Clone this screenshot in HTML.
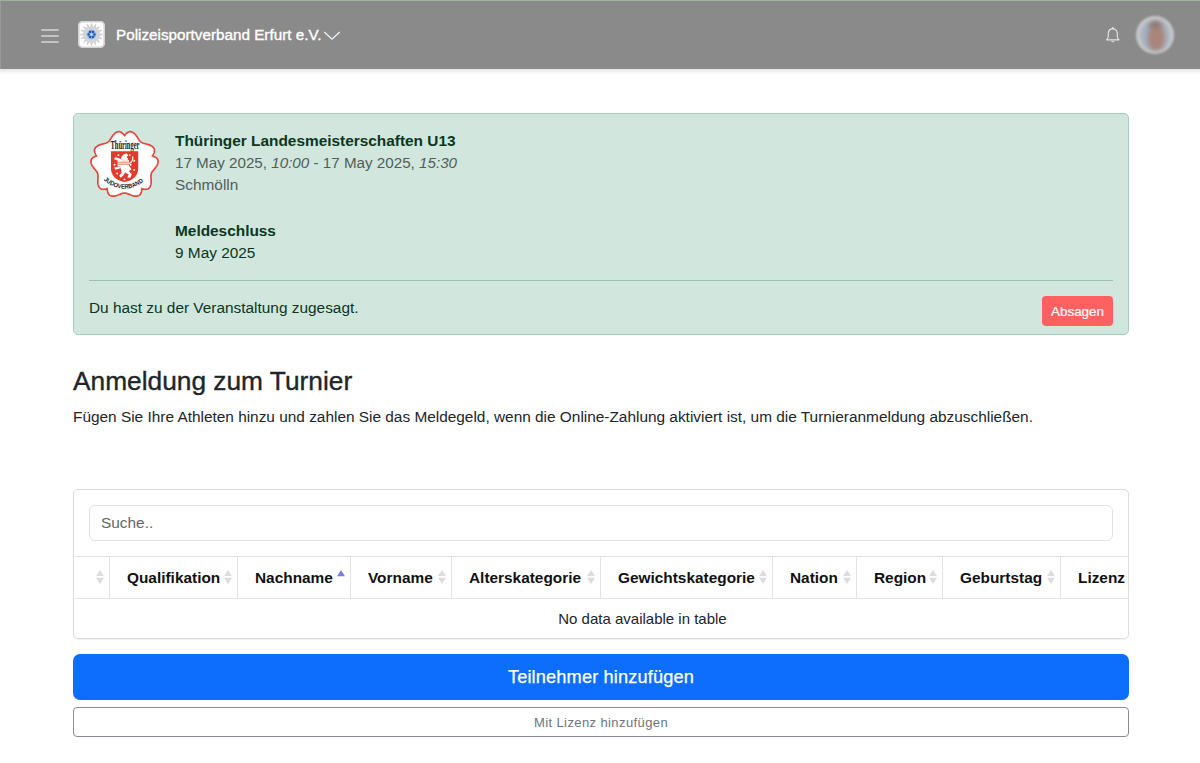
<!DOCTYPE html>
<html lang="de">
<head>
<meta charset="utf-8">
<title>Anmeldung zum Turnier</title>
<style>
*{box-sizing:border-box;margin:0;padding:0}
html,body{width:1200px;height:763px;overflow:hidden;background:#fff}
body{font-family:"Liberation Sans",sans-serif;color:#212529;position:relative;font-size:15px;line-height:1.5}
.abs{position:absolute}
.topline{left:0;top:0;width:1200px;height:1px;background:#9db59d}
header{position:absolute;left:0;top:1px;width:1200px;height:68px;background:#8a8a8a}
.shadow{left:0;top:69px;width:1200px;height:6px;background:linear-gradient(#e6e6e6,#fff)}
.hb{left:41px;width:18px;height:2px;background:#c3c3c3;border-radius:1px}
.brand{left:78px;top:21px;width:27px;height:27px;background:#fff;border-radius:5px;overflow:hidden;box-shadow:0 0 0 1.6px #d2d2d2 inset}
.title{left:116px;top:25px;font-size:15.25px;line-height:20px;color:#fff;white-space:nowrap;-webkit-text-stroke:0.35px #fff}
.alert{left:73px;top:113px;width:1056px;height:222px;background:#d1e7dd;border:1px solid #a3cfbb;border-radius:5px}
.tx{left:175px;font-size:15.4px;line-height:22.5px;white-space:nowrap;color:#0a3622}
.muted{color:#535d59}
.btn-red{left:1042px;top:296px;width:71px;height:30px;background:#ff6161;border-radius:4px;color:#fff;font-size:13.4px;line-height:30px;padding-top:1px;text-align:center;-webkit-text-stroke:0.2px #fff}
h2{position:absolute;left:73px;top:364.5px;font-size:26.3px;line-height:32px;font-weight:400;color:#212529;white-space:nowrap;-webkit-text-stroke:0.35px #212529}
.lead{left:73px;top:406px;font-size:15.4px;line-height:22px;white-space:nowrap;color:#212529}
.card{left:73px;top:489px;width:1056px;height:150px;border:1px solid #dcdcdc;border-radius:5px;overflow:hidden;box-shadow:0 1px 1px rgba(0,0,0,.06)}
.search{left:89px;top:505px;width:1024px;height:36px;border:1px solid #dee2e6;border-radius:6px;color:#5f666c;font-size:15.4px;line-height:34px;padding-left:11px}
.th{top:556px;height:43px;border-top:1px solid #e3e3e3;border-bottom:1px solid #e3e3e3}
.vb{top:557px;width:1px;height:41px;background:#e3e3e3}
.hd{top:570px;font-size:15.4px;line-height:16px;font-weight:700;color:#111;white-space:nowrap}
.btn-blue{left:73px;top:654px;width:1056px;height:46px;background:#0d6efd;border-radius:7px;color:#fff;font-size:18.2px;letter-spacing:0.15px;line-height:46px;text-align:center;-webkit-text-stroke:0.25px #fff}
.btn-out{left:73px;top:707px;width:1056px;height:30px;border:1px solid #878d93;border-radius:4px;color:#6c757d;font-size:13px;letter-spacing:0.4px;line-height:29px;text-align:center}
.sort{top:570px;width:8px;height:14px}
.sort svg{display:block}
.nodata{left:75px;width:1135px;top:608px;font-size:15px;line-height:22px;text-align:center;color:#212529}
.avatar{left:1136px;top:16px;width:38px;height:38px;border-radius:50%;background:#c9c9c9;filter:blur(0.8px);overflow:hidden}
.avatar i{position:absolute;left:3.5px;top:3.5px;width:31px;height:31px;border-radius:50%;background:radial-gradient(ellipse 11px 16px at 53% 58%,#b08377 0%,#a88479 50%,rgba(168,132,121,0) 100%),radial-gradient(ellipse 9px 7px at 50% 18%,#7f6a66 0%,rgba(127,106,102,0) 100%),linear-gradient(90deg,#aab7c7 0%,#a0acbd 25%,#9c9195 50%,#a6adbb 75%,#b2bdca 100%);filter:blur(1.5px)}
</style>
</head>
<body>
<div class="abs topline"></div>
<header></header>
<div class="abs" style="left:0;top:1px;width:1px;height:68px;background:#9a9a9a"></div>
<div class="abs shadow"></div>
<div class="abs hb" style="top:29px"></div>
<div class="abs hb" style="top:35px"></div>
<div class="abs hb" style="top:41px"></div>
<div class="abs brand"><svg width="27" height="27" viewBox="0 0 27 27" style="position:absolute;left:0;top:0"><polygon points="13.50,2.20 12.17,6.83 9.18,3.06 9.72,7.85 5.51,5.51 7.85,9.72 3.06,9.18 6.83,12.17 2.20,13.50 6.83,14.83 3.06,17.82 7.85,17.28 5.51,21.49 9.72,19.15 9.18,23.94 12.17,20.17 13.50,24.80 14.83,20.17 17.82,23.94 17.28,19.15 21.49,21.49 19.15,17.28 23.94,17.82 20.17,14.83 24.80,13.50 20.17,12.17 23.94,9.18 19.15,9.72 21.49,5.51 17.28,7.85 17.82,3.06 14.83,6.83" fill="#d6d6d6" stroke="#c4c4c4" stroke-width="0.6"/><circle cx="13.5" cy="13.5" r="5.3" fill="#b8cdea"/><circle cx="13.5" cy="13.5" r="4.4" fill="#7fa5dc"/><circle cx="12.05" cy="10.99" r="1.15" fill="#1f56b0"/><circle cx="10.60" cy="13.50" r="1.15" fill="#1f56b0"/><circle cx="12.05" cy="16.01" r="1.15" fill="#1f56b0"/><circle cx="14.95" cy="16.01" r="1.15" fill="#1f56b0"/><circle cx="16.40" cy="13.50" r="1.15" fill="#1f56b0"/><circle cx="14.95" cy="10.99" r="1.15" fill="#1f56b0"/><circle cx="13.5" cy="13.5" r="1.3" fill="#c9daf2"/></svg></div>
<svg class="abs" style="left:322px;top:29px" width="20" height="12" viewBox="0 0 20 12"><polyline points="2.3,3 10,10.2 17.7,3" fill="none" stroke="#f2f2f2" stroke-width="1.3"/></svg>
<svg class="abs" style="left:1104px;top:25px" width="18" height="20" viewBox="0 0 18 20"><path d="M2.7,14.8 L14.9,14.8 C13.9,13.9 13.3,12.6 13.3,11 L13.3,8.6 C13.3,5.7 11.5,3.8 8.8,3.8 C6.1,3.8 4.3,5.7 4.3,8.6 L4.3,11 C4.3,12.6 3.7,13.9 2.7,14.8 Z" fill="none" stroke="#e4e4e4" stroke-width="1.15" stroke-linejoin="round"/><circle cx="8.8" cy="3.1" r="1" fill="#e4e4e4"/><path d="M7.1,16.3 C7.3,17.6 10.3,17.6 10.5,16.3 Z" fill="#e4e4e4"/></svg>
<div class="abs avatar"><i></i></div>
<div class="abs title">Polizeisportverband Erfurt e.V.</div>

<div class="abs alert"></div>
<svg class="abs" style="left:90px;top:129px" width="69" height="71" viewBox="0 0 69 71">
<polygon points="34.50,6.50 33.98,5.87 33.43,5.26 32.86,4.68 32.28,4.16 31.68,3.70 31.07,3.31 30.46,3.00 29.85,2.79 29.24,2.66 28.64,2.64 28.05,2.72 27.48,2.87 26.92,3.07 26.38,3.32 25.85,3.61 25.34,3.96 24.85,4.34 24.38,4.76 23.93,5.21 23.50,5.69 23.09,6.19 22.71,6.71 22.33,7.24 21.98,7.77 21.63,8.31 21.30,8.84 20.98,9.36 20.66,9.87 20.34,10.36 20.03,10.83 19.70,11.28 19.38,11.70 19.04,12.09 18.68,12.45 18.31,12.78 17.92,13.09 17.52,13.36 17.09,13.61 16.63,13.83 16.15,14.04 15.65,14.22 15.13,14.39 14.59,14.54 14.02,14.69 13.44,14.84 12.84,14.99 12.23,15.14 11.62,15.30 11.00,15.47 10.38,15.66 9.77,15.87 9.16,16.11 8.58,16.37 8.01,16.65 7.46,16.97 6.95,17.32 6.47,17.70 6.02,18.11 5.62,18.55 5.26,19.02 4.94,19.51 4.68,20.05 4.52,20.62 4.44,21.24 4.46,21.89 4.56,22.57 4.74,23.27 5.00,23.98 5.32,24.70 5.69,25.41 6.10,26.12 6.54,26.81 5.77,27.12 5.03,27.45 4.31,27.81 3.63,28.20 3.00,28.63 2.45,29.09 1.96,29.58 1.57,30.09 1.26,30.64 1.06,31.20 0.95,31.78 0.92,32.37 0.93,32.96 1.00,33.56 1.12,34.15 1.29,34.74 1.50,35.32 1.75,35.90 2.04,36.47 2.37,37.02 2.72,37.57 3.09,38.10 3.48,38.61 3.88,39.12 4.28,39.61 4.68,40.09 5.08,40.56 5.47,41.02 5.84,41.47 6.19,41.92 6.51,42.36 6.81,42.80 7.07,43.25 7.31,43.70 7.51,44.15 7.68,44.61 7.82,45.09 7.92,45.57 7.99,46.08 8.04,46.59 8.06,47.12 8.06,47.67 8.04,48.24 8.00,48.82 7.96,49.42 7.92,50.03 7.87,50.66 7.83,51.30 7.81,51.94 7.80,52.59 7.81,53.23 7.85,53.88 7.91,54.52 8.01,55.15 8.14,55.76 8.31,56.36 8.52,56.93 8.78,57.48 9.07,58.01 9.40,58.50 9.78,58.95 10.21,59.36 10.71,59.69 11.27,59.95 11.90,60.14 12.57,60.25 13.29,60.30 14.05,60.27 14.83,60.19 15.62,60.06 16.42,59.89 17.22,59.69 17.27,60.51 17.35,61.32 17.47,62.12 17.64,62.88 17.85,63.61 18.11,64.28 18.43,64.89 18.80,65.43 19.22,65.88 19.70,66.25 20.22,66.53 20.77,66.75 21.33,66.92 21.92,67.03 22.52,67.10 23.13,67.13 23.75,67.11 24.38,67.04 25.01,66.94 25.64,66.81 26.26,66.64 26.88,66.45 27.50,66.24 28.10,66.02 28.69,65.79 29.27,65.55 29.84,65.32 30.40,65.09 30.94,64.88 31.47,64.69 32.00,64.52 32.51,64.37 33.01,64.25 33.51,64.17 34.01,64.12 34.50,64.10 34.99,64.12 35.49,64.17 35.99,64.25 36.49,64.37 37.00,64.52 37.53,64.69 38.06,64.88 38.60,65.09 39.16,65.32 39.73,65.55 40.31,65.79 40.90,66.02 41.50,66.24 42.12,66.45 42.74,66.64 43.36,66.81 43.99,66.94 44.62,67.04 45.25,67.11 45.87,67.13 46.48,67.10 47.08,67.03 47.67,66.92 48.23,66.75 48.78,66.53 49.30,66.25 49.78,65.88 50.20,65.43 50.57,64.89 50.89,64.28 51.15,63.61 51.36,62.88 51.53,62.12 51.65,61.32 51.73,60.51 51.78,59.69 52.58,59.89 53.38,60.06 54.17,60.19 54.95,60.27 55.71,60.30 56.43,60.25 57.10,60.14 57.73,59.95 58.29,59.69 58.79,59.36 59.22,58.95 59.60,58.50 59.93,58.01 60.22,57.48 60.48,56.93 60.69,56.36 60.86,55.76 60.99,55.15 61.09,54.52 61.15,53.88 61.19,53.23 61.20,52.59 61.19,51.94 61.17,51.30 61.13,50.66 61.08,50.03 61.04,49.42 61.00,48.82 60.96,48.24 60.94,47.67 60.94,47.12 60.96,46.59 61.01,46.08 61.08,45.57 61.18,45.09 61.32,44.61 61.49,44.15 61.69,43.70 61.93,43.25 62.19,42.80 62.49,42.36 62.81,41.92 63.16,41.47 63.53,41.02 63.92,40.56 64.32,40.09 64.72,39.61 65.12,39.12 65.52,38.61 65.91,38.10 66.28,37.57 66.63,37.02 66.96,36.47 67.25,35.90 67.50,35.32 67.71,34.74 67.88,34.15 68.00,33.56 68.07,32.96 68.08,32.37 68.05,31.78 67.94,31.20 67.74,30.64 67.43,30.09 67.04,29.58 66.55,29.09 66.00,28.63 65.37,28.20 64.69,27.81 63.97,27.45 63.23,27.12 62.46,26.81 62.90,26.12 63.31,25.41 63.68,24.70 64.00,23.98 64.26,23.27 64.44,22.57 64.54,21.89 64.56,21.24 64.48,20.62 64.32,20.05 64.06,19.51 63.74,19.02 63.38,18.55 62.98,18.11 62.53,17.70 62.05,17.32 61.54,16.97 60.99,16.65 60.42,16.37 59.84,16.11 59.23,15.87 58.62,15.66 58.00,15.47 57.38,15.30 56.77,15.14 56.16,14.99 55.56,14.84 54.98,14.69 54.41,14.54 53.87,14.39 53.35,14.22 52.85,14.04 52.37,13.83 51.91,13.61 51.48,13.36 51.08,13.09 50.69,12.78 50.32,12.45 49.96,12.09 49.62,11.70 49.30,11.28 48.97,10.83 48.66,10.36 48.34,9.87 48.02,9.36 47.70,8.84 47.37,8.31 47.02,7.77 46.67,7.24 46.29,6.71 45.91,6.19 45.50,5.69 45.07,5.21 44.62,4.76 44.15,4.34 43.66,3.96 43.15,3.61 42.62,3.32 42.08,3.07 41.52,2.87 40.95,2.72 40.36,2.64 39.76,2.66 39.15,2.79 38.54,3.00 37.93,3.31 37.32,3.70 36.72,4.16 36.14,4.68 35.57,5.26 35.02,5.87" fill="#fff" stroke="#e8463c" stroke-width="1.7" stroke-linejoin="miter"/>
<text x="20.5" y="20.2" font-family="Liberation Serif" font-weight="700" font-size="12" textLength="29" lengthAdjust="spacingAndGlyphs" fill="#1a1a1a">Thüringer</text>
<path d="M21,22.3 H48.2 V39 Q48.2,50.5 34.6,53 Q21,50.5 21,39 Z" fill="#e23a2e"/>
<g fill="#fff">
<path d="M31,30.5 L31.6,27.6 L33.6,25.3 L36.8,24.6 L38.2,26.4 L36.6,28 L38.3,30.2 L36.2,31.4 Z"/>
<path d="M24.6,28.6 L26.2,28.2 L32.2,30.4 L31.6,32.6 L25.8,31 L24.4,30.4 Z"/>
<rect x="27.6" y="31.2" width="11.4" height="5.9"/>
<path d="M24.2,38.6 L29.6,37.2 L30.4,39.2 L25.2,40.8 Z"/>
<path d="M29.8,37 L39.2,37 L41.6,40.2 L38.8,42.2 L41.8,45.2 L40.4,48.8 L37.4,48.4 L38.6,45.6 L35.2,43.4 L33.2,46.4 L30.8,48.8 L29.2,46.8 L31.6,43.6 L31,40.2 Z"/>
<circle cx="28.4" cy="26.3" r="0.95"/><circle cx="39.7" cy="26.1" r="0.95"/><circle cx="44.2" cy="31.7" r="0.95"/><circle cx="24.6" cy="35.7" r="0.95"/><circle cx="40.6" cy="35.7" r="0.95"/><circle cx="44.2" cy="40.9" r="0.95"/><circle cx="27.2" cy="44.5" r="0.95"/><circle cx="34.5" cy="50.4" r="0.95"/>
</g>
<path d="M38.6,34.6 C41.6,33.6 43.4,31.2 42.6,27.4" fill="none" stroke="#fff" stroke-width="1.2"/>
<g stroke="#e23a2e" stroke-width="0.7"><line x1="27.6" y1="33.2" x2="39" y2="33.2"/><line x1="27.6" y1="35.2" x2="39" y2="35.2"/></g>
<path id="arc" d="M13.5,51 Q34.5,68.5 55.5,51" fill="none"/>
<text font-family="Liberation Sans" font-size="6.3" font-weight="700" fill="#1a1a1a"><textPath href="#arc" textLength="44" lengthAdjust="spacingAndGlyphs">JUDOVERBAND</textPath></text>
</svg>
<div class="abs tx" style="top:130px;font-weight:700">Thüringer Landesmeisterschaften U13</div>
<div class="abs tx muted" style="top:151.5px;font-size:15.2px">17 May 2025, <i>10:00</i> - 17 May 2025, <i>15:30</i></div>
<div class="abs tx muted" style="top:174px">Schmölln</div>
<div class="abs tx" style="top:220px;font-weight:700">Meldeschluss</div>
<div class="abs tx" style="top:242px">9 May 2025</div>
<div class="abs" style="left:89px;top:280px;width:1024px;height:1px;background:#9fbfae"></div>
<div class="abs tx" style="left:89px;top:297px">Du hast zu der Veranstaltung zugesagt.</div>
<div class="abs btn-red">Absagen</div>

<h2>Anmeldung zum Turnier</h2>
<div class="abs lead">Fügen Sie Ihre Athleten hinzu und zahlen Sie das Meldegeld, wenn die Online-Zahlung aktiviert ist, um die Turnieranmeldung abzuschließen.</div>

<div class="abs card"></div>
<div class="abs search">Suche..</div>
<div class="abs" style="left:74px;top:556px;width:1054px;height:1px;background:#e3e3e3"></div>
<div class="abs" style="left:74px;top:598px;width:1054px;height:1px;background:#e3e3e3"></div>
<div class="abs vb" style="left:109px"></div>
<div class="abs vb" style="left:237px"></div>
<div class="abs vb" style="left:350px"></div>
<div class="abs vb" style="left:451px"></div>
<div class="abs vb" style="left:600px"></div>
<div class="abs vb" style="left:772px"></div>
<div class="abs vb" style="left:856px"></div>
<div class="abs vb" style="left:942px"></div>
<div class="abs vb" style="left:1060px"></div>
<div class="abs sort" style="left:96px"><svg width="8" height="14" viewBox="0 0 8 14"><path d="M0 6L4 0L8 6Z" fill="#dcdcdc"/><path d="M0 7.8L4 14L8 7.8Z" fill="#dcdcdc"/></svg></div>
<div class="abs hd" style="left:127px">Qualifikation</div>
<div class="abs sort" style="left:224px"><svg width="8" height="14" viewBox="0 0 8 14"><path d="M0 6L4 0L8 6Z" fill="#dcdcdc"/><path d="M0 7.8L4 14L8 7.8Z" fill="#dcdcdc"/></svg></div>
<div class="abs hd" style="left:255px">Nachname</div>
<div class="abs sort" style="left:337px"><svg width="8" height="14" viewBox="0 0 8 14"><path d="M0 6.2L4 0L8 6.2Z" fill="#7a80dd"/></svg></div>
<div class="abs hd" style="left:368px">Vorname</div>
<div class="abs sort" style="left:438px"><svg width="8" height="14" viewBox="0 0 8 14"><path d="M0 6L4 0L8 6Z" fill="#dcdcdc"/><path d="M0 7.8L4 14L8 7.8Z" fill="#dcdcdc"/></svg></div>
<div class="abs hd" style="left:469px">Alterskategorie</div>
<div class="abs sort" style="left:587px"><svg width="8" height="14" viewBox="0 0 8 14"><path d="M0 6L4 0L8 6Z" fill="#dcdcdc"/><path d="M0 7.8L4 14L8 7.8Z" fill="#dcdcdc"/></svg></div>
<div class="abs hd" style="left:618px">Gewichtskategorie</div>
<div class="abs sort" style="left:759px"><svg width="8" height="14" viewBox="0 0 8 14"><path d="M0 6L4 0L8 6Z" fill="#dcdcdc"/><path d="M0 7.8L4 14L8 7.8Z" fill="#dcdcdc"/></svg></div>
<div class="abs hd" style="left:790px">Nation</div>
<div class="abs sort" style="left:843px"><svg width="8" height="14" viewBox="0 0 8 14"><path d="M0 6L4 0L8 6Z" fill="#dcdcdc"/><path d="M0 7.8L4 14L8 7.8Z" fill="#dcdcdc"/></svg></div>
<div class="abs hd" style="left:874px">Region</div>
<div class="abs sort" style="left:929px"><svg width="8" height="14" viewBox="0 0 8 14"><path d="M0 6L4 0L8 6Z" fill="#dcdcdc"/><path d="M0 7.8L4 14L8 7.8Z" fill="#dcdcdc"/></svg></div>
<div class="abs hd" style="left:960px">Geburtstag</div>
<div class="abs sort" style="left:1047px"><svg width="8" height="14" viewBox="0 0 8 14"><path d="M0 6L4 0L8 6Z" fill="#dcdcdc"/><path d="M0 7.8L4 14L8 7.8Z" fill="#dcdcdc"/></svg></div>
<div class="abs hd" style="left:1078px">Lizenz</div>
<div class="abs nodata">No data available in table</div>

<div class="abs btn-blue">Teilnehmer hinzufügen</div>
<div class="abs btn-out">Mit Lizenz hinzufügen</div>
</body>
</html>
